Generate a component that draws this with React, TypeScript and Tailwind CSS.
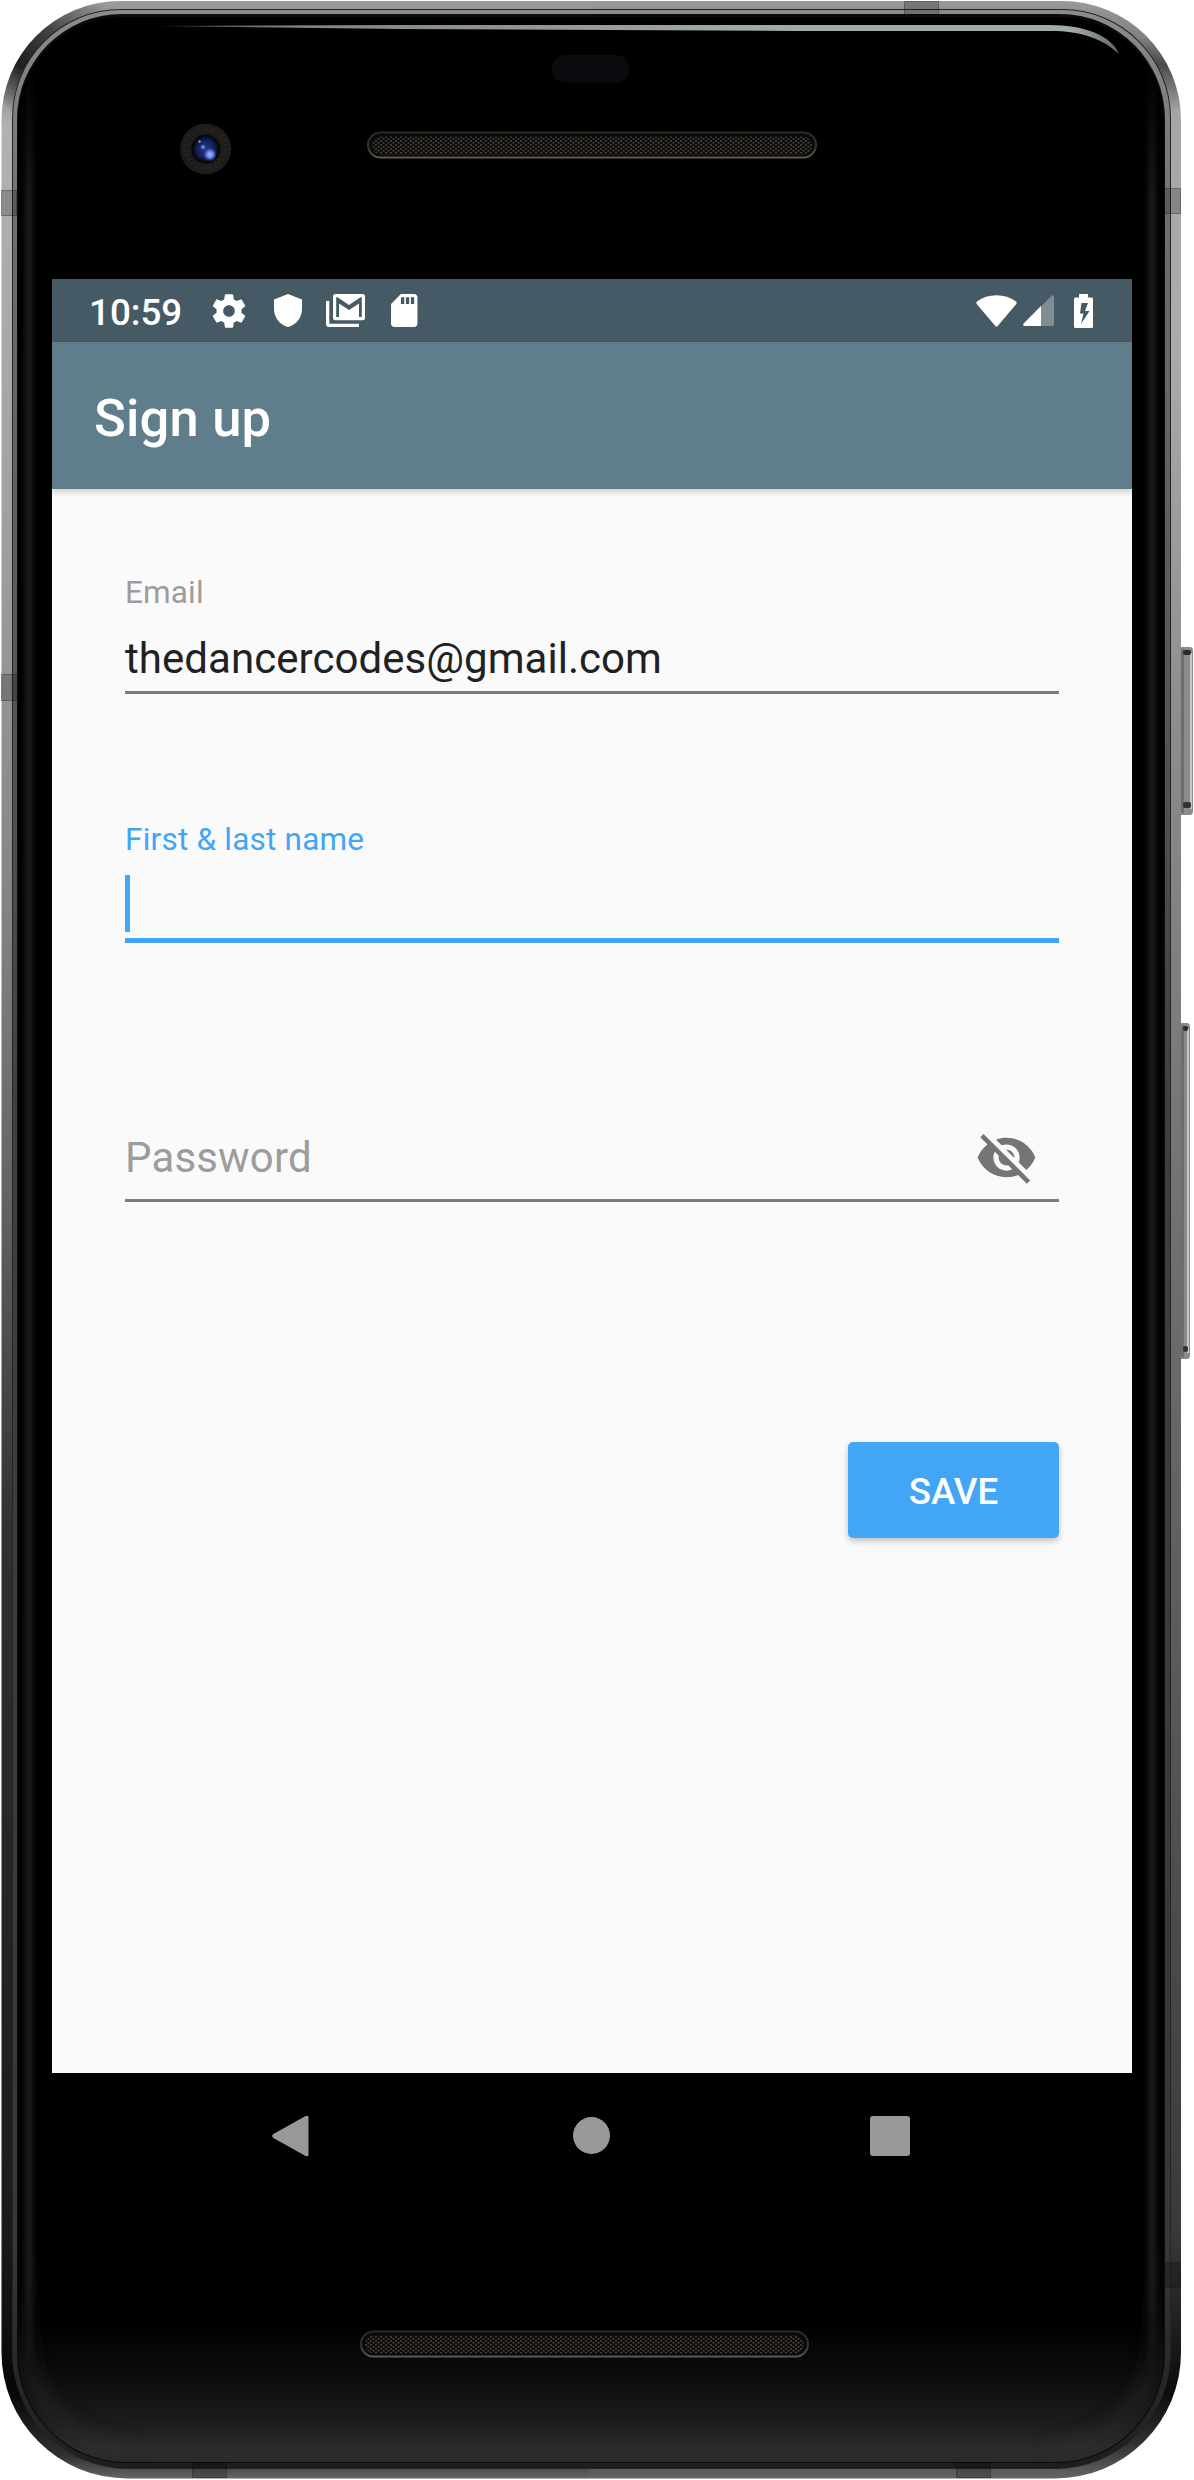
import React from "react";

/** Rounded body outline; top and bottom corners have separate radii. */
function outline(l: number, t: number, r: number, b: number, rt: number, rb: number) {
  return `M${l + rt} ${t}H${r - rt}A${rt} ${rt} 0 0 1 ${r} ${t + rt}V${b - rb}A${rb} ${rb} 0 0 1 ${r - rb} ${b}H${l + rb}A${rb} ${rb} 0 0 1 ${l} ${b - rb}V${t + rt}A${rt} ${rt} 0 0 1 ${l + rt} ${t}Z`;
}

function Speaker({ x, y, w }: { x: number; y: number; w: number }) {
  return (
    <g>
      <rect x={x + 1} y={y + 1} width={w - 2} height="25" rx="12.5" fill="#0a0a0a" stroke="url(#rim)" strokeWidth="2" />
      <rect x={x + 5} y={y + 5} width={w - 10} height="18" rx="9" fill="url(#mesh)" />
    </g>
  );
}

function SideButton({ y, h, w }: { y: number; h: number; w: number }) {
  return (
    <g>
      <path d={`M1180 ${y}h${w - 3}q3 0 3 4v${h - 8}q0 4 -3 4h-${w - 3}z`} fill="#8b8b8b" />
      <rect x="1181" y={y + 2} width="3" height={h - 4} fill="#6d6d6d" />
      <rect x={1180 + w - 3} y={y + 6} width="2" height={h - 12} fill="#c4c8c7" />
      <rect x="1183" y={y + 3} width={w - 5} height="5" rx="2" fill="#2a2a2a" />
      <rect x="1183" y={y + h - 13} width={w - 5} height="6" rx="2" fill="#333" />
    </g>
  );
}

function Device() {
  return (
    <svg className="absolute inset-0" width="1194" height="2480" viewBox="0 0 1194 2480" aria-hidden="true">
      <defs>
        <linearGradient id="metalL" x1="0" y1="0" x2="0" y2="2480" gradientUnits="userSpaceOnUse">
          <stop offset="0" stopColor="#979b9a" />
          <stop offset=".035" stopColor="#8c8c8c" />
          <stop offset=".05" stopColor="#b2b2b2" />
          <stop offset=".2" stopColor="#a2a2a2" />
          <stop offset=".36" stopColor="#858585" />
          <stop offset=".48" stopColor="#646464" />
          <stop offset=".62" stopColor="#303030" />
          <stop offset=".9" stopColor="#1a1a1a" />
          <stop offset=".965" stopColor="#060606" />
          <stop offset=".99" stopColor="#303030" />
          <stop offset="1" stopColor="#686868" />
        </linearGradient>
        <linearGradient id="metalR" x1="0" y1="0" x2="0" y2="2480" gradientUnits="userSpaceOnUse">
          <stop offset="0" stopColor="#979b9a" />
          <stop offset=".015" stopColor="#808080" />
          <stop offset=".026" stopColor="#4a4a4a" />
          <stop offset=".045" stopColor="#a5a5a5" />
          <stop offset=".13" stopColor="#acacac" />
          <stop offset=".3" stopColor="#8b8b8b" />
          <stop offset=".5" stopColor="#707070" />
          <stop offset=".7" stopColor="#565656" />
          <stop offset=".9" stopColor="#393939" />
          <stop offset=".965" stopColor="#0c0c0c" />
          <stop offset=".985" stopColor="#303030" />
          <stop offset="1" stopColor="#686868" />
        </linearGradient>
        <linearGradient id="inner" x1="0" y1="0" x2="0" y2="2480" gradientUnits="userSpaceOnUse">
          <stop offset="0" stopColor="#8d8d8d" />
          <stop offset=".1" stopColor="#6c6c6c" />
          <stop offset=".25" stopColor="#5a5a5a" />
          <stop offset=".45" stopColor="#3f3f3f" />
          <stop offset=".9" stopColor="#383838" />
          <stop offset="1" stopColor="#1c1c1c" />
        </linearGradient>
        <linearGradient id="chin" x1="0" y1="2320" x2="0" y2="2462" gradientUnits="userSpaceOnUse">
          <stop offset="0" stopColor="#000" />
          <stop offset=".35" stopColor="#0b0b0b" />
          <stop offset=".72" stopColor="#1b1b1b" />
          <stop offset=".9" stopColor="#2b2b2b" />
          <stop offset="1" stopColor="#2b2b2b" />
        </linearGradient>
        <linearGradient id="edge" x1="0" x2="1">
          <stop offset="0" stopColor="#191919" stopOpacity="0" />
          <stop offset=".5" stopColor="#1b1b1b" />
          <stop offset="1" stopColor="#191919" stopOpacity="0" />
        </linearGradient>
        <linearGradient id="edge-fade" x1="0" y1="60" x2="0" y2="2400" gradientUnits="userSpaceOnUse">
          <stop offset="0" stopColor="#000" />
          <stop offset=".06" stopColor="#fff" />
          <stop offset=".95" stopColor="#fff" />
          <stop offset="1" stopColor="#000" />
        </linearGradient>
        <mask id="edge-mask" maskUnits="userSpaceOnUse" x="0" y="0" width="1194" height="2480">
          <rect y="60" width="1194" height="2340" fill="url(#edge-fade)" />
        </mask>
        <linearGradient id="corner-glow" x1="0" y1="2200" x2="0" y2="2450" gradientUnits="userSpaceOnUse">
          <stop offset="0" stopColor="#2b2b2b" stopOpacity="0" />
          <stop offset=".6" stopColor="#2b2b2b" stopOpacity=".6" />
          <stop offset="1" stopColor="#2e2e2e" />
        </linearGradient>
        <linearGradient id="topline" x1="158" y1="0" x2="1120" y2="0" gradientUnits="userSpaceOnUse">
          <stop offset="0" stopColor="#4a5150" />
          <stop offset=".15" stopColor="#7b8583" />
          <stop offset=".6" stopColor="#a0a9a7" />
          <stop offset=".95" stopColor="#a3abaa" />
          <stop offset="1" stopColor="#606867" />
        </linearGradient>
        <linearGradient id="rim" x1="0" y1="0" x2="0" y2="1">
          <stop offset="0" stopColor="#2a2a2a" />
          <stop offset=".6" stopColor="#343434" />
          <stop offset="1" stopColor="#5c5a55" />
        </linearGradient>
        <linearGradient id="black-corner" x1="20" y1="120" x2="110" y2="10" gradientUnits="userSpaceOnUse">
          <stop offset="0" stopColor="#0a0a0a" stopOpacity="0" />
          <stop offset=".3" stopColor="#0a0a0a" stopOpacity=".85" />
          <stop offset=".6" stopColor="#1a1a1a" stopOpacity=".7" />
          <stop offset="1" stopColor="#1a1a1a" stopOpacity="0" />
        </linearGradient>
        <radialGradient id="lens" cx=".5" cy=".5" r=".5">
          <stop offset="0" stopColor="#23388a" />
          <stop offset=".7" stopColor="#131f55" />
          <stop offset="1" stopColor="#05070f" />
        </radialGradient>
        <radialGradient id="glint" cx=".5" cy=".5" r=".5">
          <stop offset="0" stopColor="#a9c0ff" />
          <stop offset=".5" stopColor="#5f7fe6" />
          <stop offset="1" stopColor="#2b45a8" stopOpacity="0" />
        </radialGradient>
        <pattern id="mesh" width="5" height="4" patternUnits="userSpaceOnUse">
          <rect width="5" height="4" fill="#0d0c0a" />
          <rect x="0" y="0" width="2" height="1.6" fill="#46423a" />
          <rect x="2.5" y="2" width="2" height="1.6" fill="#46423a" />
        </pattern>
        <clipPath id="left"><rect width="590" height="2480" /></clipPath>
        <clipPath id="right"><rect x="590" width="604" height="2480" /></clipPath>
        <clipPath id="glass"><path d={outline(18, 17, 1164, 2462, 104, 108)} /></clipPath>
        <filter id="soft" x="-50%" y="-20%" width="200%" height="140%"><feGaussianBlur stdDeviation="9" /></filter>
      </defs>

      <SideButton y={647} h={168} w={13} />
      <SideButton y={1023} h={336} w={10} />

      <path d={outline(1.5, 1, 1181, 2478.5, 119, 126)} fill="url(#metalL)" clipPath="url(#left)" />
      <path d={outline(1.5, 1, 1181, 2478.5, 119, 126)} fill="url(#metalR)" clipPath="url(#right)" />
      <path d="M1.5 120A119 119 0 0 1 120 1V12A106 106 0 0 0 12 120Z" fill="url(#black-corner)" />
      <path d={outline(12, 9, 1171, 2469, 109, 116)} fill="#242424" />
      <path d={outline(13, 10, 1170, 2468, 108, 115)} fill="url(#inner)" />
      <path d={outline(17, 14, 1165, 2463, 105, 109)} fill="#0b0b0d" />
      <path d={outline(18, 17, 1164, 2462, 104, 108)} fill="#000" />

      <g clipPath="url(#glass)">
        <rect x="18" y="2320" width="1146" height="142" fill="url(#chin)" />
        <path d="M26 2240V2340A112 112 0 0 0 134 2452" fill="none" stroke="url(#corner-glow)" strokeWidth="14" opacity=".7" filter="url(#soft)" />
        <path d="M1156 2240V2340A112 112 0 0 1 1048 2452" fill="none" stroke="url(#corner-glow)" strokeWidth="14" opacity=".7" filter="url(#soft)" />
        <g mask="url(#edge-mask)">
          <rect x="21" y="60" width="16" height="2340" fill="url(#edge)" />
          <rect x="1144" y="60" width="16" height="2340" fill="url(#edge)" />
        </g>
      </g>

      <path d="M158 26L400 25H1050C1085 25 1112 36 1119 54C1103 39 1082 31 1050 31H794L400 29Z" fill="url(#topline)" />

      {/* antenna seams */}
      <g fill="#000" fillOpacity=".2" stroke="#111" strokeOpacity=".35" strokeWidth="1">
        <rect x="1.5" y="190.5" width="15" height="25" />
        <rect x="1.5" y="674.5" width="16" height="26" />
        <rect x="1164.5" y="188.5" width="16" height="25" />
        <rect x="1164.5" y="2262.5" width="16" height="25" />
        <rect x="904.5" y="1.5" width="34" height="13" />
        <rect x="192.5" y="2463.5" width="34" height="14" />
        <rect x="956.5" y="2463.5" width="34" height="14" />
      </g>

      <circle cx="205.7" cy="149" r="25.5" fill="#1e1b1b" />
      <circle cx="205.7" cy="149" r="20" fill="none" stroke="#252222" strokeWidth="5" strokeDasharray="2 3" />
      <circle cx="205.7" cy="149" r="14.5" fill="#07080c" />
      <circle cx="205.7" cy="149" r="13" fill="url(#lens)" />
      <circle cx="210" cy="154.500" r="7" fill="url(#glint)" />
      <circle cx="203" cy="147" r="3" fill="url(#glint)" opacity=".8" />
      <circle cx="199.500" cy="141.500" r="1.200" fill="#8894c8" />

      <rect x="551.500" y="55" width="78" height="27.500" rx="13.700" fill="#0a0b0f" />
      <Speaker x={367} y={131.5} w={450} />
      <Speaker x={360} y={2330.500} w={449} />
    </svg>
  );
}

function StatusBar() {
  return (
    <div className="flex h-[63px] items-center bg-[#455a64] pr-[39px] pl-[37px] text-white">
      <span className="relative top-[2px] w-[121px] text-[36.75px] leading-[40px] font-medium">10:59</span>
      <svg className="ml-[-1px] size-[40px] shrink-0" viewBox="0 0 24 24" fill="currentColor">
        <path d="M19.430 12.980c.04-.32.07-.64.07-.98s-.03-.66-.07-.98l2.110-1.650c.19-.15.24-.42.12-.64l-2-3.460c-.12-.22-.39-.3-.61-.22l-2.490 1c-.52-.4-1.080-.73-1.690-.98l-.38-2.650C14.460 2.180 14.250 2 14 2h-4c-.25 0-.46.18-.49.42l-.38 2.650c-.61.25-1.170.59-1.690.98l-2.490-1c-.23-.09-.49 0-.61.22l-2 3.460c-.13.22-.07.49.12.64l2.110 1.650c-.04.32-.07.65-.07.98s.03.66.07.98l-2.110 1.650c-.19.15-.24.42-.12.64l2 3.460c.12.22.39.3.61.22l2.490-1c.52.4 1.080.73 1.690.98l.38 2.650c.03.24.24.42.49.42h4c.25 0 .46-.18.49-.42l.38-2.650c.61-.25 1.170-.59 1.690-.98l2.490 1c.23.09.49 0 .61-.22l2-3.460c.12-.22.07-.49-.12-.64l-2.110-1.650zM12 15.500c-1.930 0-3.500-1.570-3.500-3.500s1.570-3.500 3.500-3.500 3.500 1.570 3.500 3.500-1.570 3.500-3.500 3.500z" />
      </svg>
      <svg className="ml-[25px] h-[33px] w-[28px] shrink-0" viewBox="0 0 28 33" fill="currentColor">
        <path d="M14 0L28 5.500V15C28 23.500 22 31 14 33C6 31 0 23.500 0 15V5.500Z" />
      </svg>
      <svg className="ml-[24px] h-[33px] w-[39px] shrink-0" viewBox="0 0 39 33" fill="currentColor">
        <path d="M0 7h3.300v22.700h29.700V33H3Q0 33 0 30Z" />
        <path fillRule="evenodd" d="M9.500 0H36.500Q39 0 39 2.500V23.700Q39 26.200 36.500 26.200H9.500Q7 26.200 7 23.700V2.500Q7 0 9.500 0ZM10.200 3.300V23H13V9.500L23 16L33 9.500V23H35.800V3.300H34.500L23 11L11.500 3.300Z" />
      </svg>
      <svg className="ml-[26px] h-[33px] w-[26.500px] shrink-0" viewBox="4 2 16 20" fill="currentColor">
        <path d="M18 2h-8L4.020 8 4 20c0 1.100.9 2 2 2h12c1.100 0 2-.9 2-2V4c0-1.100-.9-2-2-2zm-6 6h-2V4h2v4zm3 0h-2V4h2v4zm3 0h-2V4h2v4z" />
      </svg>
      <svg className="ml-auto h-[32px] w-[41px] shrink-0" viewBox="0 0 41 32" fill="currentColor">
        <path d="M1 6.500C12 -1.700 29 -1.700 40 6.500Q41.300 7.600 40.300 9L21.700 31Q20.500 32.300 19.300 31L.7 9Q-.3 7.600 1 6.500Z" />
      </svg>
      <svg className="ml-[6px] h-[31px] w-[31px] shrink-0" viewBox="0 0 31 31">
        <path d="M29 .6Q31 -.5 31 2V29.500Q31 31 29.500 31H18V11.600Z" fill="#7f8d94" />
        <path d="M18 11V31H1.500Q-.7 30.500 .6 28.400Z" fill="#fff" />
      </svg>
      <svg className="ml-[20px] h-[34px] w-[19px] shrink-0" viewBox="0 0 19 34" fill="currentColor">
        <path fillRule="evenodd" d="M5 0H14V3.500H17.500Q19 3.500 19 5V32.500Q19 34 17.500 34H1.500Q0 34 0 32.500V5Q0 3.500 1.500 3.500H5ZM7.500 9L6 19.500H9.500L7 30L15.500 17H11L14 9Z" />
      </svg>
    </div>
  );
}

function NavBar() {
  return (
    <div className="flex h-[126px] items-center bg-black pl-[220px] text-[#999999]">
      <svg className="mb-px h-[42px] w-[37px]" viewBox="0 0 38 42" fill="currentColor">
        <path d="M34.500 .5Q37.500 -.8 37.500 2V40Q37.500 42.800 34.500 41.500L1 22.700Q-.5 21 1 19.300Z" />
      </svg>
      <div className="mb-px ml-[264px] size-[37px] rounded-full bg-[#999999]" />
      <div className="ml-[260px] size-[40px] rounded-[3px] bg-[#999999]" />
    </div>
  );
}

export default function App() {
  return (
    <div className="relative h-[2480px] w-[1194px] overflow-hidden bg-white font-['Roboto',sans-serif]">
      <Device />
      <div className="relative pt-[279px] pl-[52px]">
        <div className="flex h-[1920px] w-[1080px] flex-col">
          <StatusBar />
          <header className="relative z-10 flex h-[147px] items-center bg-[#607d8b] pl-[42px] shadow-[0_3px_6px_rgba(0,0,0,0.18)]">
            <h1 className="pt-[4px] text-[52.5px] leading-[60px] font-medium tracking-[0.2px] text-white">Sign up</h1>
          </header>
          <main className="flex-1 bg-[#fafafa] pt-[86px] pr-[73px] pl-[73px]">
            <div className="border-b-[3px] border-[#7c7c7c]">
              <div className="h-[59px] text-[31.500px] leading-[36px] tracking-[0.15px] text-[#9c9c9c]">Email</div>
              <div className="h-[57px] text-[42px] leading-[50px] tracking-[0.05px] text-[#212121]">thedancercodes@gmail.com</div>
            </div>
            <div className="mt-[128px] border-b-[5px] border-[#42a5f5]">
              <div className="h-[53px] text-[31.500px] leading-[36px] tracking-[0.22px] text-[#42a5f5]">First &amp; last name</div>
              <div className="h-[63px]">
                <div className="h-[57px] w-[5px] bg-[#42a5f5]" />
              </div>
            </div>
            <div className="mt-[183px] flex h-[76px] justify-between border-b-[3px] border-[#7c7c7c] pr-[21px]">
              <span className="text-[42px] leading-[64px] tracking-[0.15px] text-[#9c9c9c]">Password</span>
              <svg className="size-[63px]" viewBox="0 0 24 24" fill="#757575">
                <path d="M12 7c2.760 0 5 2.240 5 5 0 .65-.13 1.260-.36 1.830l2.920 2.920c1.510-1.260 2.700-2.890 3.430-4.750-1.730-4.390-6-7.500-11-7.500-1.400 0-2.740.25-3.980.7l2.160 2.160C10.740 7.130 11.350 7 12 7zM2 4.270l2.280 2.280.46.46C3.080 8.300 1.780 10.020 1 12c1.730 4.390 6 7.500 11 7.500 1.550 0 3.030-.3 4.380-.84l.42.42L19.730 22 21 20.730 3.270 3 2 4.270zM7.530 9.800l1.550 1.550c-.05.21-.08.43-.08.65 0 1.660 1.340 3 3 3 .22 0 .44-.03.65-.08l1.550 1.550c-.67.33-1.410.53-2.200.53-2.760 0-5-2.240-5-5 0-.79.2-1.530.53-2.200zm4.310-.78l3.150 3.150.02-.16c0-1.660-1.340-3-3-3l-.17.01z" />
              </svg>
            </div>
            <div className="mt-[240px] flex justify-end">
              <button className="h-[96px] w-[211px] rounded-[5px] bg-[#42a5f5] pt-[3px] text-[36.750px] leading-[93px] font-medium text-white shadow-[0_3px_6px_rgba(0,0,0,0.24)]">
                SAVE
              </button>
            </div>
          </main>
          <NavBar />
        </div>
      </div>
    </div>
  );
}
